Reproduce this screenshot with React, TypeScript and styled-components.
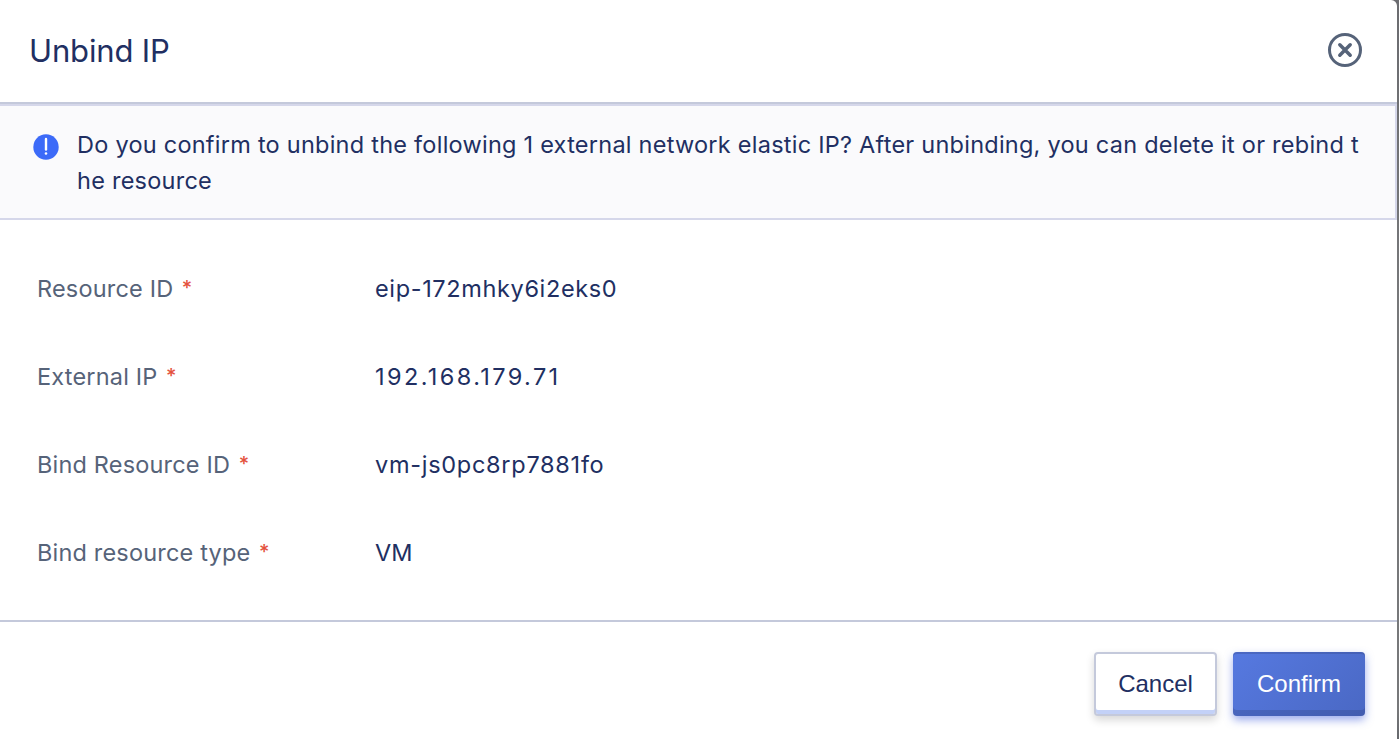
import React from 'react';
import styled, { createGlobalStyle, css } from 'styled-components';

const GlobalStyle = createGlobalStyle`
  *, *::before, *::after { box-sizing: border-box; }
  body {
    margin: 0;
    overflow: hidden;
    background: linear-gradient(#6b6c70, #77787a 40%, #77787a 96%, #66686c);
    font-family: Inter, 'Liberation Sans', sans-serif;
    font-weight: 380;
    color: #212f62;
  }
`;

const Dialog = styled.section`
  display: flex;
  flex-direction: column;
  width: 1397px;
  height: 739px;
  background: #fff;
  border-top-right-radius: 6px;
  overflow: hidden;
`;

const Header = styled.header`
  display: flex;
  align-items: center;
  justify-content: space-between;
  height: 104px;
  padding: 0 34px 2px 29px;
  border-bottom: 2px solid #c4c9db;
`;

const Title = styled.h1`
  margin: 0;
  padding-top: 2px;
  font-size: 31px;
  font-weight: 380;
  line-height: 40px;
  letter-spacing: -0.15px;
  white-space: nowrap;
`;

const CloseButton = styled.button`
  display: flex;
  padding: 0;
  border: 0;
  background: none;
  color: #566379;
`;

const Notice = styled.div`
  display: flex;
  height: 116px;
  padding: 21px 0 0 33px;
  border: 2px solid #d5d7ea;
  border-left: 0;
  background: #fafafc;
`;

const NoticeIcon = styled.svg`
  flex: none;
  margin: 7px 18px 0 0;
`;

const NoticeText = styled.p`
  margin: 0;
  font-size: 23.5px;
  line-height: 36px;
  letter-spacing: 0.245px;
  white-space: nowrap;
`;

const Fields = styled.dl`
  flex: 1;
  margin: 0;
  padding: 25px 0 0 37px;
`;

const Field = styled.div`
  display: flex;
  align-items: center;
  height: 88px;
  font-size: 23.5px;
  line-height: 36px;
  letter-spacing: 0.18px;
`;

const Label = styled.dt`
  display: flex;
  gap: 8.5px;
  width: 338px;
  color: #566379;
`;

const Required = styled.span`
  color: #e4513d;
  font-size: 20px;
  font-weight: 500;
  line-height: 35px;
`;

const Value = styled.dd<{ $spacing: number }>`
  margin: 0;
  letter-spacing: ${({ $spacing }) => $spacing}px;
`;

const Footer = styled.footer`
  display: flex;
  justify-content: flex-end;
  gap: 16px;
  height: 119px;
  padding: 30px 32px 0 0;
  border-top: 2px solid #c4c9db;
`;

const Button = styled.button<{ $primary?: boolean }>`
  height: 64px;
  padding: 0 0 1px;
  border-radius: 4px;
  font: 24px/36px 'Liberation Sans', sans-serif;
  ${({ $primary }) =>
    $primary
      ? css`
          width: 132px;
          border: 0;
          color: #fff;
          background: linear-gradient(135deg, #5679e0, #4a68c4);
          box-shadow: inset 0 -6px 0 rgba(50, 65, 130, 0.3), inset 0 2px 0 rgba(50, 65, 130, 0.3),
            0 4px 8px rgba(60, 90, 220, 0.5);
        `
      : css`
          width: 123px;
          border: 2px solid #c4c9db;
          color: #212f62;
          background: #fff;
          box-shadow: inset 0 -4px 0 #c3d1f7, 0 4px 8px rgba(0, 0, 0, 0.16);
        `}
`;

const fields: { label: string; value: string; spacing: number }[] = [
  { label: 'Resource ID', value: 'eip-172mhky6i2eks0', spacing: 0.64 },
  { label: 'External IP', value: '192.168.179.71', spacing: 2.4 },
  { label: 'Bind Resource ID', value: 'vm-js0pc8rp7881fo', spacing: 0.72 },
  { label: 'Bind resource type', value: 'VM', spacing: 0 },
];

export default function App() {
  return (
    <>
      <GlobalStyle />
      <Dialog role="dialog" aria-label="Unbind IP">
        <Header>
          <Title>Unbind IP</Title>
          <CloseButton aria-label="Close">
            <svg width="36" height="36" viewBox="0 0 36 36" fill="none" stroke="currentColor">
              <circle cx="18" cy="18" r="15.5" strokeWidth="3" />
              <path d="M12.8 12.8l10.4 10.4M23.2 12.8L12.8 23.2" strokeWidth="3.5" strokeLinecap="round" />
            </svg>
          </CloseButton>
        </Header>
        <Notice>
          <NoticeIcon width="26" height="26" viewBox="0 0 26 26">
            <circle cx="13" cy="13" r="12.7" fill="#3c6af8" />
            <path d="M13 5v10.5" stroke="#fff" strokeWidth="2.4" strokeLinecap="round" />
            <circle cx="13" cy="19.5" r="1.3" fill="#fff" />
          </NoticeIcon>
          <NoticeText>
            Do you confirm to unbind the following 1 external network elastic IP? After unbinding, you can delete it or rebind t
            <br />
            he resource
          </NoticeText>
        </Notice>
        <Fields>
          {fields.map(({ label, value, spacing }) => (
            <Field key={label}>
              <Label>
                {label}
                <Required>*</Required>
              </Label>
              <Value $spacing={spacing}>{value}</Value>
            </Field>
          ))}
        </Fields>
        <Footer>
          <Button>Cancel</Button>
          <Button $primary>Confirm</Button>
        </Footer>
      </Dialog>
    </>
  );
}
